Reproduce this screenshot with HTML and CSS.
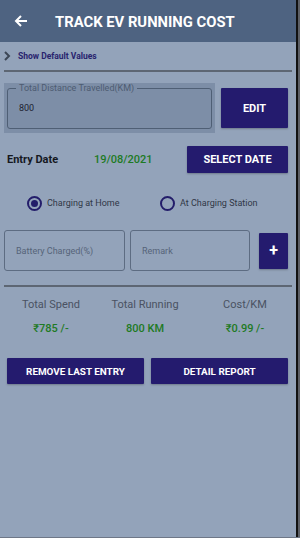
FILE: index.html
```html
<!DOCTYPE html>
<html lang="en">
<head>
  <meta charset="UTF-8">
  <meta name="viewport" content="width=device-width, initial-scale=1.0">
  <title>Track EV Running Cost</title>
  <link rel="stylesheet" href="styles.css">
</head>
<body>
  <div class="screen">
    <div class="app">
      <div class="toolbar">
        <svg class="back" width="16" height="16" viewBox="0 0 16 16">
          <path d="M14 8H3M8 3L3 8l5 5" fill="none" stroke="#fff" stroke-width="2"/>
        </svg>
        <span class="title">TRACK EV RUNNING COST</span>
      </div>

      <div class="defaults">
        <svg width="7" height="10" viewBox="0 0 7 10">
          <path d="M1 1l4 4-4 4" fill="none" stroke="#3c4656" stroke-width="2"/>
        </svg>
        <span>Show Default Values</span>
      </div>
      <div class="divider"></div>

      <div class="distance-row">
        <div class="distance-box">
          <div class="outlined">
            <span class="float-label">Total Distance Travelled(KM)</span>
            <span class="value">800</span>
          </div>
        </div>
        <button class="btn edit">EDIT</button>
      </div>

      <div class="date-row">
        <span class="date-label">Entry Date</span>
        <span class="date-value">19/08/2021</span>
        <button class="btn select-date">SELECT DATE</button>
      </div>

      <div class="radio-row">
        <label class="radio"><span class="dot checked"></span>Charging at Home</label>
        <label class="radio"><span class="dot"></span>At Charging Station</label>
      </div>

      <div class="input-row">
        <div class="field">Battery Charged(%)</div>
        <div class="field">Remark</div>
        <button class="btn plus">+</button>
      </div>
      <div class="divider second"></div>

      <div class="stats">
        <div class="stat">
          <div class="stat-label">Total Spend</div>
          <div class="stat-value">₹785 /-</div>
        </div>
        <div class="stat">
          <div class="stat-label">Total Running</div>
          <div class="stat-value">800 KM</div>
        </div>
        <div class="stat">
          <div class="stat-label">Cost/KM</div>
          <div class="stat-value">₹0.99 /-</div>
        </div>
      </div>

      <div class="action-row">
        <button class="btn action">REMOVE LAST ENTRY</button>
        <button class="btn action">DETAIL REPORT</button>
      </div>
    </div>
    <div class="edge"></div>
  </div>
</body>
</html>
```

FILE: styles.css
```css
body {
  margin: 0;
  font-family: Roboto, "Noto Sans", sans-serif;
  background: #93a3ba;
}
.screen {
  display: flex;
  height: 537px;
  border-bottom: 1px solid #6e7787;
}
.app {
  flex: 1;
  background: #93a3ba;
}
.edge {
  width: 4px;
  background: linear-gradient(to right, #111 0, #111 2px, #5c5f66 2px);
}
.toolbar {
  height: 42px;
  background: #4e6381;
  display: flex;
  align-items: center;
  padding-left: 13px;
}
.back {
  margin-right: 26px;
}
.title {
  color: #fff;
  font-weight: bold;
  font-size: 14.8px;
  margin-top: 1px;
}
.defaults {
  display: flex;
  align-items: center;
  height: 28px;
  padding-left: 4px;
  gap: 7px;
}
.defaults span {
  font-size: 8.5px;
  font-weight: bold;
  color: #28246e;
}
.divider {
  height: 2px;
  background: #5d6673;
  margin: 0 4px 0 4px;
}
.distance-row {
  display: flex;
  align-items: center;
  margin-top: 11px;
  padding-left: 4px;
  gap: 6px;
}
.distance-box {
  width: 211px;
  height: 50px;
  background: #7d8ea7;
  padding: 5px 3px 0 3px;
  box-sizing: border-box;
}
.outlined {
  position: relative;
  height: 41px;
  border: 1px solid #4f5f75;
  border-radius: 3px;
  box-sizing: border-box;
}
.float-label {
  position: absolute;
  top: -6px;
  left: 8px;
  padding: 0 3px;
  background: #7d8ea7;
  font-size: 9px;
  color: #4d5c72;
  line-height: 11px;
}
.value {
  position: absolute;
  left: 11px;
  top: 14px;
  font-size: 9px;
  color: #1c2230;
}
.btn {
  border: none;
  background: #241b6e;
  color: #fff;
  font-family: Roboto, sans-serif;
  font-weight: bold;
  border-radius: 1px;
  box-shadow: 0 1px 2px rgba(0, 0, 0, 0.25);
  padding: 0;
}
.edit {
  width: 67px;
  height: 40px;
  font-size: 11px;
}
.date-row {
  display: flex;
  align-items: center;
  margin-top: 13px;
  padding-left: 7px;
}
.date-label {
  width: 87px;
  font-size: 11px;
  font-weight: bold;
  color: #15181f;
}
.date-value {
  width: 93px;
  font-size: 11px;
  font-weight: 500;
  color: #1d7a24;
}
.select-date {
  width: 101px;
  height: 27px;
  font-size: 11px;
}
.radio-row {
  display: flex;
  margin-top: 22px;
  padding-left: 27px;
  height: 16px;
  align-items: center;
}
.radio {
  display: flex;
  align-items: center;
  font-size: 9px;
  color: #303746;
  gap: 5px;
}
.radio:first-child {
  width: 133px;
}
.dot {
  width: 11px;
  height: 11px;
  border: 2px solid #231d6a;
  border-radius: 50%;
  display: flex;
  align-items: center;
  justify-content: center;
}
.dot.checked::after {
  content: "";
  width: 7px;
  height: 7px;
  border-radius: 50%;
  background: #231d6a;
}
.input-row {
  display: flex;
  align-items: center;
  margin-top: 19px;
  padding-left: 4px;
  gap: 5px;
}
.field {
  width: 121px;
  height: 41px;
  box-sizing: border-box;
  border: 1px solid #5d6c82;
  border-radius: 3px;
  padding-left: 11px;
  display: flex;
  align-items: center;
  font-size: 9px;
  color: #566479;
}
.field + .field {
  width: 120px;
}
.plus {
  width: 29px;
  height: 36px;
  margin-left: 4px;
  font-size: 16px;
  line-height: 16px;
}
.divider.second {
  margin-top: 14px;
}
.stats {
  display: flex;
  margin-top: 11px;
  padding: 0 4px;
}
.stat {
  flex: 1;
  text-align: center;
}
.stat:last-child {
  padding-left: 6px;
}
.stat-label {
  font-size: 11px;
  color: #4a5262;
  height: 14px;
}
.stat-value {
  font-size: 11px;
  font-weight: 500;
  color: #1e7a24;
  margin-top: 10px;
}
.action-row {
  display: flex;
  margin-top: 23px;
  padding-left: 7px;
  gap: 7px;
}
.action {
  width: 137px;
  height: 26px;
  font-size: 9.9px;
}
```
